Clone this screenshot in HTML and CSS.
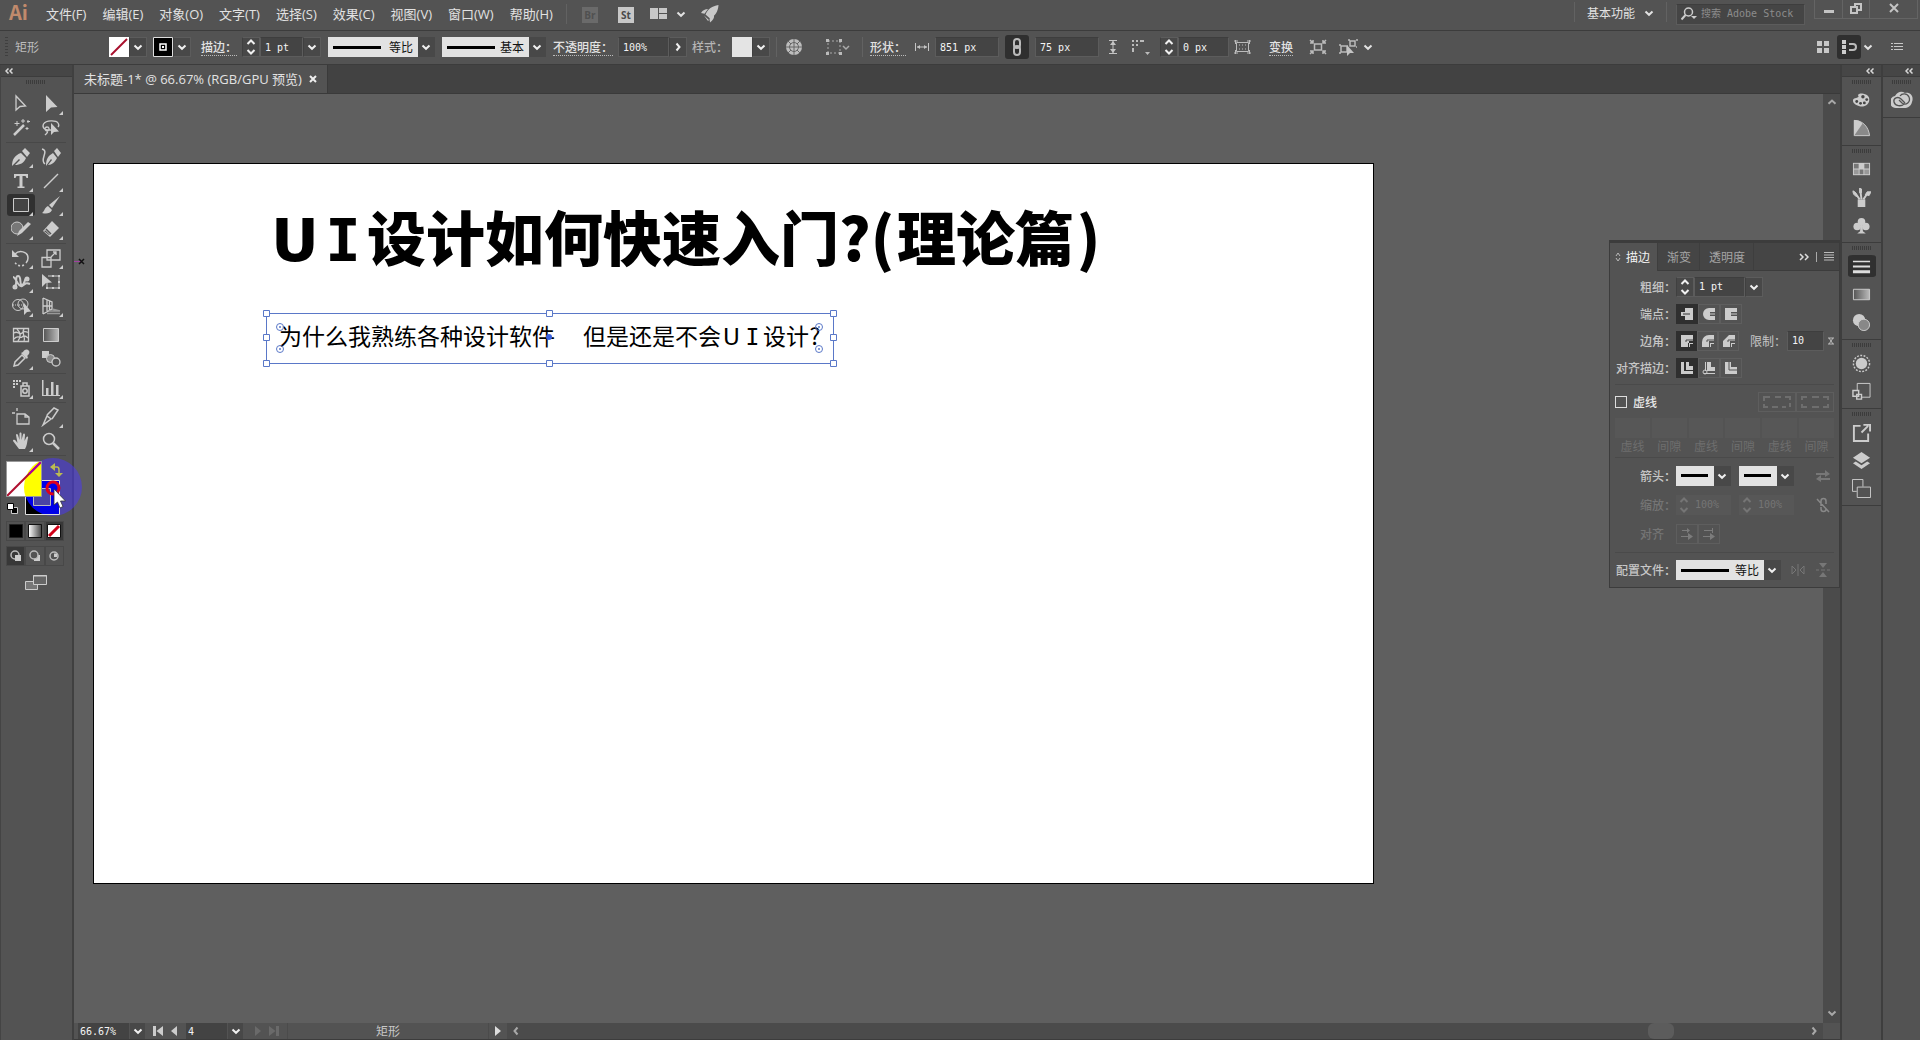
FILE: index.html
```html
<!DOCTYPE html>
<html lang="zh-CN">
<head>
<meta charset="utf-8">
<title>未标题-1</title>
<link rel="stylesheet" href="styles.css">
</head>
<body>
<svg class="defs" aria-hidden="true">
  <symbol id="down" viewBox="0 0 10 10"><path d="M1.5 3.5 5 6.8 8.500 3.500" fill="none" stroke="currentColor" stroke-width="2"/></symbol>
  <symbol id="up" viewBox="0 0 10 10"><path d="M1.500 6.800 5 3.500 8.500 6.800" fill="none" stroke="currentColor" stroke-width="2"/></symbol>
  <symbol id="right" viewBox="0 0 10 10"><path d="M3.500 1.500 6.500 5 3.500 8.500" fill="none" stroke="currentColor" stroke-width="2"/></symbol>
  <symbol id="left" viewBox="0 0 10 10"><path d="M6.500 1.500 3.500 5 6.500 8.500" fill="none" stroke="currentColor" stroke-width="2"/></symbol>
  <symbol id="collapse" viewBox="0 0 8 6"><path d="M3.500 .5 1 3 3.500 5.500M7.500 .5 5 3 7.500 5.500" fill="none" stroke="currentColor" stroke-width="1.500"/></symbol>
  <symbol id="steps" viewBox="0 0 10 18"><path d="M1.500 6 5 2.500 8.500 6M1.500 12 5 15.500 8.500 12" fill="none" stroke="currentColor" stroke-width="2"/></symbol>
</svg>

<header class="menubar">
  <span class="logo">Ai</span>
  <nav class="menus">
    <button>文件(F)</button><button>编辑(E)</button><button>对象(O)</button><button>文字(T)</button><button>选择(S)</button><button>效果(C)</button><button>视图(V)</button><button>窗口(W)</button><button>帮助(H)</button>
  </nav>
  <i class="sep"></i>
  <button class="app app-off">Br</button>
  <button class="app">St</button>
  <button class="bare arrange" aria-label="排列文档"><svg width="18" height="12"><path d="M0 0h8v11H0zM9 0h8v5H9zM9 6h8v5H9z" fill="#c8c8c8"/></svg><svg width="10" height="10"><use href="#down"/></svg></button>
  <button class="bare" aria-label="GPU 预览"><svg width="18" height="18"><path d="M17.500 0C11 1 7 4 4.500 9.500L9 13.500C14 11 17 7 17.500 0zM0 8C2 5 4 4 7 4L3.500 8.800zM9 17.500C12 15 13.500 13 13 10.500L8.500 13.800zM3 10.500 8 15 7 16z" fill="#c8c8c8"/></svg></button>
  <div class="spacer"></div>
  <i class="sep"></i>
  <button class="bare workspace">基本功能<svg width="10" height="10"><use href="#down"/></svg></button>
  <i class="sep"></i>
  <label class="search"><svg width="17" height="14"><circle cx="7.500" cy="5" r="4" fill="none" stroke="#ccc" stroke-width="1.500"/><path d="M4.500 8 .5 12.500" stroke="#ccc" stroke-width="2"/><path d="M10 9h6l-3 3z" fill="#ccc"/></svg><input type="text" placeholder="搜索 Adobe Stock" aria-label="搜索 Adobe Stock"></label>
  <div class="winbtns">
    <button aria-label="最小化"><svg width="12" height="16"><path d="M1 10h10v3H1z" fill="#c4c4c4"/></svg></button>
    <button aria-label="还原"><svg width="14" height="16" fill="none" stroke="#c4c4c4" stroke-width="2"><path d="M2 7h6v6H2zM6 7V4h6v6H8"/></svg></button>
    <button class="close" aria-label="关闭"><svg width="12" height="16" stroke="#c4c4c4" stroke-width="2"><path d="M2 4l8 8M10 4l-8 8"/></svg></button>
  </div>
</header>

<section class="control">
  <i class="vgrip"></i>
  <span class="what">矩形</span>
  <button class="swatch" aria-label="填色"><svg width="20" height="20"><path d="M0 0h20v20H0z" fill="#fff"/><path d="M2 18 18 2" stroke="#a80f2c" stroke-width="2"/></svg></button><button class="drop" aria-label="填色选项"><svg width="10" height="10"><use href="#down"/></svg></button>
  <button class="swatch m6" aria-label="描边颜色"><svg width="20" height="20"><path d="M.5 .5h19v19H.5z" fill="#000" stroke="#ddd"/><path d="M7 7h6v6H7z" fill="none" stroke="#fff" stroke-width="1.500"/><path d="M9 9h2v2H9z" fill="#fff"/></svg></button><button class="drop" aria-label="描边选项"><svg width="10" height="10"><use href="#down"/></svg></button>
  <label class="lab m10" for="sw">描边：</label>
  <button class="drop m5" aria-label="增减"><svg width="10" height="18"><use href="#steps"/></svg></button><input class="num w43" id="sw" value="1 pt"><button class="drop" aria-label="粗细选项"><svg width="10" height="10"><use href="#down"/></svg></button>
  <select class="profile w107 m7" aria-label="宽度配置"><option>等比</option></select>
  <select class="profile w104 m7" aria-label="画笔"><option>基本</option></select>
  <label class="lab m7" for="op">不透明度：</label>
  <input class="num w51 m5" id="op" value="100%"><button class="drop" aria-label="不透明度选项"><svg width="10" height="10"><use href="#right"/></svg></button>
  <span class="lab plain m5">样式：</span>
  <button class="swatch m4" aria-label="图形样式"><svg width="20" height="20"><path d="M0 0h20v20H0z" fill="#e4e4e4"/></svg></button><button class="drop" aria-label="样式选项"><svg width="10" height="10"><use href="#down"/></svg></button>
  <i class="sep m6"></i>
  <button class="bare m8" aria-label="重新着色"><svg width="18" height="18"><circle cx="9" cy="9" r="8" fill="#bdbdbd"/><g fill="none" stroke="#666"><circle cx="9" cy="9" r="4.500"/><path d="M9 1v16M1 9h16M3 3l3 3M15 3l-3 3M3 15l3-3M15 15l-3-3"/></g></svg></button>
  <button class="bare m23" aria-label="对齐"><svg width="24" height="16"><path d="M2 2h12v12H2z" fill="none" stroke="#aaa" stroke-dasharray="2 2"/><path d="M0 0h3v3H0zM13 0h3v3h-3zM0 13h3v3H0zM13 13h3v3h-3z" fill="#bbb"/><path d="M17 7l3 3 3-3" fill="none" stroke="#aaa" stroke-width="1.500"/></svg></button>
  <i class="sep m12"></i>
  <label class="lab m7" for="wv">形状：</label>
  <svg class="m8" width="16" height="12" stroke="#c4c4c4" fill="#c4c4c4"><path d="M1.500 2v8M14.500 2v8M3 6h10"/><path d="M3 6l3-2v4zM13 6l-3-2v4z" stroke="none"/></svg>
  <input class="num w64 m5" id="wv" value="851 px">
  <button class="toggle m6" aria-label="约束比例"><svg width="10" height="18" fill="none" stroke="#bbb" stroke-width="2"><rect x="2" y="1" width="6" height="9" rx="3"/><rect x="2" y="8" width="6" height="9" rx="3"/></svg></button>
  <input class="num w64 m6" aria-label="高度" value="75 px">
  <svg class="m8" width="12" height="16" stroke="#c4c4c4" fill="#c4c4c4"><path d="M2 1.500h8M2 14.500h8M6 2v12"/><path d="M6 2l3 4H3zM6 14l3-4H3z" stroke="none"/></svg>
  <button class="bare m12" aria-label="边角类型"><svg width="19" height="16" fill="#bbb"><path d="M1 1h2v2H1zM5 1h2v2H5zM9 1h4v2H9zM1 5h2v2H1zM5 5h2v2H5zM1 9h2v4H1zM14 13h5l-2.500 3z"/></svg></button>
  <button class="drop m10" aria-label="增减半径"><svg width="10" height="18"><use href="#steps"/></svg></button><input class="num w51" aria-label="圆角半径" value="0 px">
  <button class="bare m5" aria-label="形状模式"><svg width="17" height="14" fill="none" stroke="#bbb"><path d="M2.500 2.500h12v9h-12z"/><path d="M0 1h4M1.500 0v4M13 1h4M15.500 0v4M0 13h4M1.500 10v4M13 13h4M15.500 10v4M5 5h1M8 5h1M11 5h1M5 9h1M8 9h1M11 9h1"/></svg></button>
  <button class="lab link m18">变换</button>
  <button class="bare m16" aria-label="隔离"><svg width="18" height="16" fill="none" stroke="#bbb" stroke-width="1.500"><path d="M5.500 5h7v6h-7z"/><path d="M1 1l3 3M4 1v3H1M17 1l-3 3M14 1v3h3M1 15l3-3M4 15v-3H1M17 15l-3-3M14 15v-3h3"/></svg></button>
  <button class="bare m12" aria-label="选择类似对象"><svg width="19" height="18" fill="none" stroke="#bbb" stroke-width="1.500"><path d="M2 8h6v6H2zM11 3h5v5h-5zM0 7h2M0 15h2M9 2h2M17 2h2M17 9h1"/><path d="M8 7v11l3-3h4z" fill="#c4c4c4" stroke="none"/></svg></button>
  <button class="bare m5" aria-label="更多"><svg width="10" height="10"><use href="#down"/></svg></button>
  <div class="spacer"></div>
  <button class="bare" aria-label="网格"><svg width="14" height="14" fill="#c8c8c8"><path d="M1 1h5v5H1zM8 1h5v5H8zM1 8h5v5H1zM8 8h5v5H8z"/></svg></button>
  <button class="toggle m7" aria-label="对齐像素"><svg width="16" height="16"><path d="M1 1h4v4H1zM1 6h4v4H1zM1 11h4v4H1z" fill="#ccc"/><path d="M8 5h4a2.500 2.500 0 0 1 0 6H8" fill="none" stroke="#bbb" stroke-width="2"/></svg></button>
  <button class="bare m2" aria-label="对齐选项"><svg width="10" height="10"><use href="#down"/></svg></button>
  <button class="bare m18" aria-label="面板菜单"><svg width="12" height="10" fill="#c8c8c8"><path d="M0 1h2v1H0zM3 1h9v1H3zM0 4h2v1H0zM3 4h9v1H3zM0 7h2v1H0zM3 7h9v1H3z"/></svg></button>
</section>

<main class="work">
  <aside class="tools">
    <div class="dockhead leftalign"><svg width="8" height="6"><use href="#collapse"/></svg></div>
    <i class="hgrip"></i>
    <div class="tgroup">
      <button aria-label="选择"><svg viewBox="0 0 20 20"><path d="M5 2v14l4-3.500 5.500-.5z" fill="none" stroke="#ccc" stroke-width="1.300"/></svg></button>
      <button class="fly" aria-label="直接选择"><svg viewBox="0 0 20 20"><path d="M5 1v17l5-4.500 6.500-.5z" fill="#ccc"/></svg></button>
      <button aria-label="魔棒"><svg viewBox="0 0 20 20" stroke="#ccc" fill="none"><path d="M3 17 13 7" stroke-width="2.500"/><path d="M6 3v5M3.500 5.500h5M12 1v4M10 3h4M17 2v3M16 3.500h3M16 9v3M14.500 10.500h3"/></svg></button>
      <button aria-label="套索"><svg viewBox="0 0 20 20"><path d="M10 12C3 13 1 9 2.500 6 5 2 15 2 17 5c1 1.500 1 3 0 4M6 9a2 2 0 1 0 .1 0M7 12c0 3-2 4-3 5" fill="none" stroke="#ccc" stroke-width="1.300"/><path d="M10 5v12l3-3 5-.5z" fill="#ccc"/></svg></button>
    </div>
    <div class="tgroup">
      <button class="fly" aria-label="钢笔"><svg viewBox="0 0 20 20"><path d="M1 19C1 12 4 8 10 6l5 5c-2 5-6 7-11 7l5-5-1-1-6 6zM11 4l3-3 5 5-3 4z" fill="#ccc"/></svg></button>
      <button aria-label="曲率"><svg viewBox="0 0 20 20"><path d="M5 19C5 12 7 9 12 6l4 5c-2 4-5 7-9 7l4-5-1-1zM13 4l3-3 4 5-3 4z" fill="#ccc"/><path d="M1 2c4 1 3 4 2 7s-2 6 1 8" fill="none" stroke="#ccc" stroke-width="1.500"/></svg></button>
      <button class="fly" aria-label="文字"><svg viewBox="0 0 20 20"><path d="M3 3h14v4h-1.500l-1-2H11.500v10.500h2V17h-7v-1.500h2V5H5.500l-1 2H3z" fill="#ccc"/></svg></button>
      <button class="fly" aria-label="直线段"><svg viewBox="0 0 20 20"><path d="M3 17 17 3" stroke="#ccc" stroke-width="1.500"/></svg></button>
      <button class="fly on" aria-label="矩形"><svg viewBox="0 0 20 20"><path d="M2.500 3.500h15v13h-15z" fill="#444" stroke="#ccc"/></svg></button>
      <button class="fly" aria-label="画笔"><svg viewBox="0 0 20 20"><path d="M19 1 8 10l3 3zM7 11l4 4c-2 4-6 4-10 3 3-2 2-5 6-7z" fill="#ccc"/></svg></button>
      <button class="fly" aria-label="Shaper"><svg viewBox="0 0 20 20"><circle cx="6" cy="9" r="6" fill="#777" stroke="#ccc"/><path d="M6 17 8 12 17 3l3 2-9 9z" fill="#ccc"/></svg></button>
      <button class="fly" aria-label="橡皮擦"><svg viewBox="0 0 20 20"><path d="M11 2 18 9 9 18 2 12z" fill="#ccc"/><path d="M5 10 10 15" stroke="#535353" stroke-width="1.500"/><path d="M4.500 11.500 9 16l-1 0-5-4z" fill="#535353"/></svg></button>
    </div>
    <div class="tgroup">
      <button class="fly" aria-label="旋转"><svg viewBox="0 0 20 20" fill="none" stroke="#ccc" stroke-width="1.500"><path d="M4 6c4-4 13-3 13 4 0 3-1 4-2 5"/><path d="M13 17c-4 2-8 0-10-4" stroke-dasharray="2 2"/><path d="M1 2v7h7z" fill="#ccc" stroke="none"/></svg></button>
      <button class="fly" aria-label="缩放"><svg viewBox="0 0 20 20" fill="none" stroke="#ccc" stroke-width="1.300"><path d="M1 9.500h9V19H1zM6 2h13v10H6z"/><path d="M10 9l5-5M12 4h3v3"/></svg></button>
      <button class="fly" aria-label="宽度"><svg viewBox="0 0 20 20" fill="none" stroke="#ccc" stroke-width="2"><path d="M2 16C8 15 3 4 7 4s1 9 4 9 2-8 6-6M2 5c3 0 5 11 9 9s3-4 8-2"/><circle cx="4" cy="15" r="1.500"/><circle cx="16" cy="7" r="1.500"/></svg></button>
      <button aria-label="自由变换"><svg viewBox="0 0 20 20"><path d="M7 4h11v12H6V11" fill="none" stroke="#ccc"/><path d="M1 2v13l4-4 6-.5z" fill="#ccc"/><path d="M17 3h2v2h-2zM11 3h2v2h-2zM17 9h2v2h-2zM17 15h2v2h-2zM11 15h2v2h-2zM5 15h2v2H5z" fill="#ccc"/></svg></button>
      <button class="fly" aria-label="形状生成器"><svg viewBox="0 0 20 20"><circle cx="7" cy="9" r="5.500" fill="none" stroke="#ccc"/><circle cx="12" cy="8" r="5" fill="none" stroke="#ccc"/><path d="M2 9h9" stroke="#ccc" stroke-dasharray="1 1"/><path d="M13 7v12l3-3 4-.5z" fill="#ccc"/></svg></button>
      <button class="fly" aria-label="透视网格"><svg viewBox="0 0 20 20" fill="none" stroke="#ccc" stroke-width="1.300"><path d="M2 2v16M2 2l9 4v7L2 18M2 10h9M6 4v11M8.500 5v9"/><path d="M11 13l8 2H8M6 17.500h13" stroke="#999"/></svg></button>
    </div>
    <div class="tgroup">
      <button aria-label="网格"><svg viewBox="0 0 20 20" fill="none" stroke="#ccc" stroke-width="1.300"><path d="M2.500 3.500h15v13h-15z"/><path d="M3 8c4-3 5 3 8 0s5 0 6-1M3 14c4-5 6 0 8-2s4-1 6 1M6 4c4 4 4 8 1 12M13 4c-3 4 2 8 0 12"/></svg></button>
      <button aria-label="渐变"><svg viewBox="0 0 20 20"><defs><linearGradient id="g"><stop stop-color="#555"/><stop offset="1" stop-color="#bbb"/></linearGradient></defs><path d="M2.500 3.500h15v13h-15z" fill="url(#g)" stroke="#ccc"/></svg></button>
      <button class="fly" aria-label="吸管"><svg viewBox="0 0 20 20"><path d="M3 17 4 13l7-7 3 3-7 7z" fill="none" stroke="#ccc" stroke-width="1.500"/><path d="M10 4l6 6 1-2-1-1c3-2 3-5 1-6s-4 0-5 2z" fill="#ccc"/></svg></button>
      <button aria-label="混合"><svg viewBox="0 0 20 20"><path d="M1 2h7v7H1z" fill="#ccc"/><circle cx="9.500" cy="9.500" r="4" fill="#888" stroke="#ccc"/><circle cx="15" cy="13" r="4" fill="#535353" stroke="#ccc" stroke-width="1.300"/></svg></button>
    </div>
    <div class="tgroup">
      <button class="fly" aria-label="符号喷枪"><svg viewBox="0 0 20 20"><path d="M2 3h2M5 3h2M8 3h2M2 6h2M5 6h2M2 9h2" stroke="#ccc" stroke-width="2"/><path d="M10 8h8v10h-8zM12 8V5h4v3" fill="none" stroke="#ccc" stroke-width="1.500"/><circle cx="14" cy="13" r="2.200" fill="none" stroke="#ccc" stroke-width="1.500"/></svg></button>
      <button class="fly" aria-label="图表"><svg viewBox="0 0 20 20" fill="#ccc"><path d="M1 2h1.500v15H19v1H1zM5 10h2.500v7H5zM10 4h2.500v13H10zM15 7h2.500v10H15z"/></svg></button>
    </div>
    <div class="tgroup">
      <button aria-label="画板"><svg viewBox="0 0 20 20" fill="none" stroke="#ccc" stroke-width="1.300"><path d="M1 6h3M6 1v3M6 7h8l4 3v7H6zM14 7v3h4"/></svg></button>
      <button class="fly" aria-label="切片"><svg viewBox="0 0 20 20"><path d="M2 18 6 9l4 3zM6 8l7-7 4 2-6 9" fill="none" stroke="#ccc" stroke-width="1.500"/></svg></button>
      <button class="fly" aria-label="抓手"><svg viewBox="0 0 20 20"><path d="M8 18C6 15 4 13 2 10c0-1 1-2 3 0l1.500 2L5 4c0-1.500 1.500-1.500 2 0l1.500 5V2.500c0-1.500 2-1.500 2 0V9L12 3.500c.5-1.500 2-1 2 .5L13.500 10l2-4c1-1.200 2-.5 1.500 1-1 4-1 8-3 11z" fill="#ccc"/></svg></button>
      <button aria-label="缩放显示"><svg viewBox="0 0 20 20" fill="none" stroke="#ccc"><circle cx="8" cy="8" r="5.500" stroke-width="1.500"/><path d="M12 12l6 6" stroke-width="2.500"/></svg></button>
    </div>
    <div class="colours">
      <svg class="over" width="74" height="62">
        <defs><clipPath id="c"><circle cx="53" cy="33" r="29"/></clipPath><clipPath id="k"><path d="M7 8h34v34H7z"/></clipPath></defs>
        <circle cx="53" cy="33" r="29" fill="#4a35ff" fill-opacity=".5"/>
        <path d="M25.500 26.500h34v34h-34z" fill="#000"/><path d="M25.500 26.500h34v34h-34z" fill="#0000e8" clip-path="url(#c)"/>
        <path d="M25.500 26.500h34v34h-34z" fill="none" stroke="#ddd"/><path d="M33.500 34.500h17v17h-17z" fill="#4a44a4" stroke="#bbb"/>
        <path d="M6.500 7.500h35v35h-35z" fill="#fff" stroke="#999"/>
        <g clip-path="url(#k)"><circle cx="53" cy="33" r="29" fill="#ff0"/><path d="M6 43 42 7" stroke="#b01030" stroke-width="2"/><path d="M29 20 42 7" stroke="#b000a0" stroke-width="2"/></g>
        <path d="M52 13h5q2 0 2 3v3" fill="none" stroke="#bcbc50" stroke-width="1.500"/><path d="M50 13l5-4v8zM59 23l-4-4h8z" fill="#bcbc50"/>
        <path d="M11.500 53.500h6v6h-6z" fill="#000" stroke="#ccc"/><path d="M7.500 49.500h6v6h-6z" fill="#fff" stroke="#000"/>
        <circle cx="53" cy="34" r="6" fill="none" stroke="#e00018" stroke-width="3"/><path d="M54 35v16l3.500-3 2.500 6 3-1.500-2.500-5.500h5z" fill="#fff" stroke="#333" stroke-width=".8"/>
      </svg>
    </div>
    <div class="trio">
      <button aria-label="颜色"><svg width="14" height="14"><path d="M.5 .5h13v13H.5z" fill="#000" stroke="#222"/></svg></button>
      <button aria-label="渐变填充"><svg width="14" height="14"><defs><linearGradient id="w"><stop stop-color="#fff"/><stop offset="1" stop-color="#444"/></linearGradient></defs><path d="M.5 .5h13v13H.5z" fill="url(#w)" stroke="#111"/></svg></button>
      <button class="on" aria-label="无"><svg width="14" height="14"><path d="M.5 .5h13v13H.5z" fill="#fff" stroke="#111"/><path d="M2 12 12 2" stroke="#d00018" stroke-width="3"/></svg></button>
    </div>
    <div class="trio">
      <button class="on" aria-label="正常绘图"><svg width="12" height="12"><circle cx="5" cy="5" r="4" fill="none" stroke="#bbb" stroke-width="1.500"/><path d="M5 5h6v6H5z" fill="#ccc"/></svg></button>
      <button aria-label="背面绘图"><svg width="12" height="12"><path d="M5 5h6v6H5z" fill="#ccc"/><circle cx="5" cy="5" r="4" fill="#535353" stroke="#bbb" stroke-width="1.500"/></svg></button>
      <button aria-label="内部绘图"><svg width="12" height="12"><circle cx="6" cy="6" r="4" fill="none" stroke="#bbb" stroke-width="1.500"/><path d="M6 7V3.500h3V7z" fill="#ccc"/></svg></button>
    </div>
    <button class="bare screenmode" aria-label="屏幕模式"><svg width="23" height="17"><path d="M.5 7.500h12v8H.5z" fill="#777" stroke="#ccc"/><path d="M8.500 1.500h13v9h-13z" fill="#666" stroke="#ccc"/><path d="M8 2h14" stroke="#ccc"/></svg></button>
  </aside>

  <section class="doc">
    <div class="tabs"><div class="tab"><span>未标题-1* @ 66.67% (RGB/GPU 预览)</span><button class="bare" aria-label="关闭文档"><svg width="8" height="8" stroke="#eee" stroke-width="2"><path d="M1 1l6 6M7 1 1 7"/></svg></button></div></div>
    <div class="view">
      <div class="canvas">
        <svg class="guide" width="12" height="8"><path d="M0 4.500h8" stroke="#a040a0"/><path d="M5 2l5 5M10 2 5 7" stroke="#111" stroke-width="1.500"/></svg>
        <div class="artboard">
          <h1 class="title"><span class="lt">U</span><span class="lt slab">I</span>设计如何快速入门<span class="half">?</span><span class="half">(</span>理论篇<span class="half">)</span></h1>
          <p class="sub">为什么我熟练各种设计软件<span class="gap">　</span>但是还是不会<span class="lt">U</span><span class="lt slab">I</span>设计<span class="half">?</span></p>
          <svg class="sel" width="576" height="60" fill="#fff" stroke="#5a78c8">
            <path d="M4.500 4.500h567v50h-567z" fill="none"/>
            <path d="M1.500 1.500h6v6h-6zM284.500 1.500h6v6h-6zM568.500 1.500h6v6h-6zM1.500 25.500h6v6h-6zM568.500 25.500h6v6h-6zM1.500 51.500h6v6h-6zM284.500 51.500h6v6h-6zM568.500 51.500h6v6h-6z"/>
            <g fill="none"><circle cx="18" cy="18" r="3.500"/><circle cx="18" cy="40" r="3.500"/><circle cx="557" cy="18" r="3.500"/><circle cx="557" cy="40" r="3.500"/></g>
            <g fill="#5a78c8" stroke="none"><circle cx="18" cy="18" r="1"/><circle cx="18" cy="40" r="1"/><circle cx="557" cy="18" r="1"/><circle cx="557" cy="40" r="1"/><circle cx="287" cy="28" r="3" fill="#3a62e0"/></g>
          </svg>
        </div>
      </div>
      <div class="vscroll"><svg width="10" height="10"><use href="#up"/></svg><svg width="10" height="10"><use href="#down"/></svg></div>
    </div>
    <footer class="status">
      <input class="snum w51" aria-label="缩放比例" value="66.67%"><button class="sdrop" aria-label="缩放选项"><svg width="10" height="10"><use href="#down"/></svg></button>
      <button class="bare nav" aria-label="首项"><svg width="10" height="10" fill="#ccc"><path d="M0 0h3v10H0zM10 0v10L3.500 5z"/></svg></button>
      <button class="bare nav" aria-label="上一项"><svg width="6" height="10" fill="#ccc"><path d="M6 0v10L0 5z"/></svg></button>
      <input class="snum w41" aria-label="画板" value="4"><button class="sdrop" aria-label="画板选项"><svg width="10" height="10"><use href="#down"/></svg></button>
      <button class="bare nav m4" aria-label="下一项"><svg width="6" height="10" fill="#6a6a6a"><path d="M0 0v10l6-5z"/></svg></button>
      <button class="bare nav" aria-label="末项"><svg width="10" height="10" fill="#6a6a6a"><path d="M10 0H7v10h3zM0 0v10l6.500-5z"/></svg></button>
      <span class="sname">矩形</span>
      <button class="bare play" aria-label="状态选项"><svg width="6" height="10" fill="#ddd"><path d="M0 0v10l6-5z"/></svg></button>
      <div class="hscroll"><svg width="10" height="10"><use href="#left"/></svg><i class="thumb"></i><svg width="10" height="10"><use href="#right"/></svg></div>
      <i class="corner"></i>
    </footer>
  </section>

  <aside class="dock">
    <div class="dockhead"><svg width="8" height="6"><use href="#collapse"/></svg></div>
    <div class="dgroup"><i class="hgrip"></i>
      <button aria-label="颜色"><svg viewBox="0 0 20 20"><path d="M1 10C1 7 5 8 7 6 5 3 9 2 12 3c5 1 7 4 6 8s-6 6-10 5-7-3-7-6z" fill="#ccc"/><g fill="#444"><circle cx="5" cy="11" r="1.500"/><circle cx="9" cy="13" r="1.500"/><circle cx="13" cy="12.500" r="1.500"/><circle cx="15.500" cy="9" r="1.500"/><circle cx="11.500" cy="6" r="1.800"/></g></svg></button>
      <button aria-label="颜色参考"><svg viewBox="0 0 20 20"><path d="M2.500 1.500c9 0 15 7 16 16h-16z" fill="#8a8a8a" stroke="#ccc"/><path d="M2 1c4 0 7 1 9 4L2 18z" fill="#ccc"/></svg></button></div>
    <div class="dgroup"><i class="hgrip"></i>
      <button aria-label="色板"><svg viewBox="0 0 20 20"><path d="M1 3h18v13H1z" fill="#ccc"/><path d="M2 4h5v5H2zM13 4h5v5h-5zM8 10h4v5H8z" fill="#777"/><path d="M2 10h5v5H2zM13 10h5v5h-5z" fill="#999"/></svg></button>
      <button aria-label="画笔"><svg viewBox="0 0 20 20"><path d="M6 12h8v8H6z" fill="#ccc"/><path d="M8 12 4 6M10 12 9 4M12 12l4-6" stroke="#ccc" stroke-width="2"/><path d="M1 3c3 1 4 3 4 6-3-1-4-3-4-6zM8 0l2 1v4H8zM14 7l2-3h4l-2 4z" fill="#ccc" stroke="#ccc"/></svg></button>
      <button aria-label="符号"><svg viewBox="0 0 20 20" fill="#ccc"><circle cx="10" cy="6" r="4"/><circle cx="5.500" cy="11" r="4"/><circle cx="14.500" cy="11" r="4"/><path d="M9 9h2l.5 7 3 2.500h-9l3-2.500z"/></svg></button></div>
    <div class="dgroup"><i class="hgrip"></i>
      <button class="on" aria-label="描边"><svg viewBox="0 0 20 20" fill="#ddd"><path d="M1 4h18v1.500H1zM1 9h18v2H1zM1 14h18v3H1z"/></svg></button>
      <button aria-label="渐变"><svg viewBox="0 0 20 20"><path d="M1.500 4.500h17v11h-17z" fill="url(#g)" stroke="#ccc"/></svg></button>
      <button aria-label="透明度"><svg viewBox="0 0 20 20"><circle cx="7.500" cy="7.500" r="6.500" fill="#ccc"/><circle cx="12.500" cy="12.500" r="6" fill="#888" stroke="#ccc"/></svg></button></div>
    <div class="dgroup"><i class="hgrip"></i>
      <button aria-label="外观"><svg viewBox="0 0 20 20"><circle cx="10" cy="10" r="6" fill="#ccc"/><circle cx="10" cy="10" r="8.500" fill="none" stroke="#ccc" stroke-dasharray="2 1.500" stroke-width="1.500"/></svg></button>
      <button aria-label="图形样式"><svg viewBox="0 0 20 20" fill="none" stroke="#ccc"><path d="M5.500 9V1.500h13.500V16H10"/><path d="M1 9h6v6H1zM5 13h5v5H5z" stroke-width="1.500"/></svg></button></div>
    <div class="dgroup"><i class="hgrip"></i>
      <button aria-label="资源导出"><svg viewBox="0 0 20 20" fill="none" stroke="#ccc" stroke-width="2"><path d="M9 3H2v16h15v-8M10 10l7-7M12 2h7v7"/></svg></button>
      <button aria-label="图层"><svg viewBox="0 0 20 20" fill="#ccc"><path d="M10 1l9 6-9 6-9-6zM4 11l6 4 6-4 3 2-9 6-9-6z"/></svg></button>
      <button aria-label="画板面板"><svg viewBox="0 0 20 20" fill="none" stroke="#ccc"><path d="M5 13H.5V.5h11V8M5.500 8.500h14v11h-14z"/></svg></button></div>
  </aside>
  <aside class="dock last">
    <div class="dockhead"><svg width="8" height="6"><use href="#collapse"/></svg></div>
    <div class="dgroup"><i class="hgrip"></i>
      <button aria-label="Creative Cloud"><svg class="wide" viewBox="0 0 22 18"><path d="M6 17A6 6 0 0 1 4 5C7 0 11 0 14 2c6-1 9 4 7 9-1 4-4 6-8 6z" fill="#ccc"/><path d="M13 13c-3 3-9 2-10-2s4-6 7-3l4 4M9 5c2-3 7-3 9 1 2 5-3 9-7 6L8 9" fill="none" stroke="#535353" stroke-width="1.300"/></svg></button></div>
  </aside>

  <section class="panel">
    <div class="ptabs"><button class="cur"><svg width="6" height="10" fill="none" stroke="#bbb"><path d="M1 4l2-3 2 3M1 6l2 3 2-3"/></svg>描边</button><button>渐变</button><button>透明度</button><div class="spacer"></div><svg width="10" height="8" fill="none" stroke="#ddd" stroke-width="1.500"><path d="M1 1l3 3-3 3M6 1l3 3-3 3"/></svg><i class="bar"></i><svg width="10" height="9" fill="#bbb"><path d="M0 0h10v1H0zM0 2.500h10v1H0zM0 5h10v1H0zM0 7.500h10v1H0z"/></svg></div>
    <div class="pbody">
      <div class="row"><label class="pl" for="pw">粗细：</label><button class="drop" aria-label="增减粗细"><svg width="10" height="18"><use href="#steps"/></svg></button><input class="num w51" id="pw" value="1 pt"><button class="drop" aria-label="粗细列表"><svg width="10" height="10"><use href="#down"/></svg></button></div>
      <div class="row"><span class="pl">端点：</span>
        <button class="opt on" aria-label="平头端点"><svg width="14" height="14"><path d="M5 1h8v12H5V9H1V5h4z" fill="#ccc"/><path d="M3 7h7" stroke="#333"/></svg></button><button class="opt" aria-label="圆头端点"><svg width="14" height="14"><path d="M13 1v4H8v4h5v4H7A6 6 0 0 1 7 1z" fill="#ccc"/><path d="M6 7h7" stroke="#ccc"/></svg></button><button class="opt" aria-label="方头端点"><svg width="14" height="14"><path d="M1 1h12v4H7v4h6v4H1z" fill="#ccc"/><path d="M6 7h7" stroke="#ccc"/></svg></button></div>
      <div class="row"><span class="pl">边角：</span>
        <button class="opt on" aria-label="斜接连接"><svg width="14" height="14"><path d="M1 1h12v6H9v2H8v4H1z" fill="#ccc"/><path d="M6 6h7M6 6v2" stroke="#444" fill="none"/><path d="M9 9h4v1h-3v3H9z" fill="#ccc"/></svg></button><button class="opt" aria-label="圆角连接"><svg width="14" height="14"><path d="M1 13V8a7 7 0 0 1 7-7h5v6H8v6z" fill="#ccc"/><path d="M6 6h7M6 6v2" stroke="#555" fill="none"/><path d="M9 9h4v1h-3v3H9z" fill="#ccc"/></svg></button><button class="opt" aria-label="斜角连接"><svg width="14" height="14"><path d="M1 13V7l6-6h6v6H8v6z" fill="#ccc"/><path d="M6 6h7M6 6v2" stroke="#555" fill="none"/><path d="M9 9h4v1h-3v3H9z" fill="#ccc"/></svg></button>
        <label class="lim" for="lim">限制：</label><input class="num w37" id="lim" value="10"><span class="x"><svg width="6" height="8" stroke="#bbb" fill="none"><path d="M0 1h6M0 7h6M1 1l4 6M5 1 1 7"/></svg></span></div>
      <div class="row"><span class="pl">对齐描边：</span>
        <button class="opt on" aria-label="居中对齐"><svg width="14" height="14"><path d="M1 1h3v9h9v3H1zM6 1h3v4h4v4H6z" fill="#ccc"/></svg></button><button class="opt" aria-label="内侧对齐"><svg width="14" height="14"><path d="M5 1h4v5h4v4H5zM2 12h11v1H2zM3 1h1v9H3z" fill="#ccc"/><circle cx="3" cy="11" r="2" fill="none" stroke="#ccc"/></svg></button><button class="opt" aria-label="外侧对齐"><svg width="14" height="14"><path d="M1 1h6v5h6v7H1z" fill="#ccc"/><path d="M5 1v8h8" fill="none" stroke="#555"/></svg></button></div>
      <div class="dashrow"><label><input type="checkbox">虚线</label><div class="spacer"></div><button class="opt wideopt" aria-label="保留虚线"><svg width="28" height="12" fill="none" stroke="#6e6e6e" stroke-width="2"><path d="M1 5V1h6M12 1h6M22 1h5v3M1 8v3h4M9 11h6M19 11h4M27 7v4"/></svg></button><button class="opt wideopt" aria-label="对齐虚线"><svg width="28" height="12" fill="none" stroke="#6e6e6e" stroke-width="2"><path d="M1 4V1h5M11 1h7M22 1h5v3M1 8v3h5M11 11h7M22 11h5V8"/></svg></button></div>
      <div class="cells"><label><input disabled>虚线</label><label><input disabled>间隙</label><label><input disabled>虚线</label><label><input disabled>间隙</label><label><input disabled>虚线</label><label><input disabled>间隙</label></div>
      <div class="row r29"><span class="pl">箭头：</span><select class="profile w55 arrow" aria-label="起点箭头"><option></option></select><select class="profile w55 arrow m8" aria-label="终点箭头"><option></option></select><svg class="end" width="14" height="12" fill="#777"><path d="M0 3h9V0l5 4-5 3V5H0zM14 8H5V5L0 9l5 3v-2h9z"/></svg></div>
      <div class="row r29 off"><span class="pl">缩放：</span><span class="dis"><svg width="10" height="18"><use href="#steps"/></svg><input disabled value="100%" aria-label="起点缩放"></span><span class="dis m8"><svg width="10" height="18"><use href="#steps"/></svg><input disabled value="100%" aria-label="终点缩放"></span><svg class="end" width="14" height="16" fill="none" stroke="#888" stroke-width="1.500"><path d="M5 9V4a2.500 2.500 0 0 1 5 0v3M5 10v2a2.500 2.500 0 0 0 5 0M1 2l12 13"/></svg></div>
      <div class="row r29 off"><span class="pl">对齐<b class="blank"></b></span><button class="opt" aria-label="扩展到终点外"><svg width="14" height="12" fill="#7c7c7c"><path d="M2 2h5V0l3 2.500L7 5V3H2zM1 8h7V5l5 3.500L8 12V9H1z"/></svg></button><button class="opt" aria-label="置于终点处"><svg width="14" height="12" fill="#7c7c7c"><path d="M2 2h8V0h1v5h-1V3H2zM1 8h7V5l5 3.500L8 12V9H1z"/></svg></button></div>
      <div class="row lastrow"><label class="pl" for="pf">配置文件：</label><select class="profile w105" id="pf"><option>等比</option></select><svg class="m10" width="14" height="12" fill="none" stroke="#777"><path d="M1 2v8l4-4zM7 0v12M13 2v8L9 6z"/></svg><svg class="end" width="14" height="14" fill="#777"><path d="M3 0h8L7 5zM3 14h8L7 9zM0 6.500h3v1H0zM5 6.500h4v1H5zM11 6.500h3v1h-3z"/></svg></div>
    </div>
  </section>
</main>
</body>
</html>
```
FILE: styles.css
```css
* { box-sizing: border-box; }
html, body { height: 100%; margin: 0; }
body {
  display: flex; flex-direction: column; overflow: hidden;
  background: #535353; color: #e2e2e2;
  font: 12px/16px "Noto Sans CJK SC", sans-serif;
}
.defs { position: absolute; width: 0; height: 0; }
svg { display: block; flex: none; }
button, input, select { font: inherit; color: inherit; border: 0; border-radius: 0; padding: 0; margin: 0; background: none; }
i { display: block; flex: none; }
.spacer { flex: 1; }
.bare { display: flex; align-items: center; flex: none; }
.sep { width: 1px; height: 20px; background: #626262; }

.menubar { display: flex; align-items: center; flex: none; height: 31px; padding: 0 2px 6px 9px; border-bottom: 1px solid #3c3c3c; }
.logo { width: 29px; color: #c08a6c; font: bold 20px/24px "Noto Sans CJK SC", sans-serif; }
.menus { display: flex; margin-top: 3px; }
.menus button { padding: 0 8px; font: 13px/18px "Open Sans", "Noto Sans CJK SC", sans-serif; }
.menus + .sep { margin: 4px 15px 0 5px; }
.app { width: 16px; height: 16px; margin: 6px 20px 0 0; background: #c8c8c8; color: #4a4a4a; font: bold 10px/16px "Open Sans", sans-serif; text-align: center; }
.app-off { background: #6a6a6a; color: #505050; }
.app + .arrange { margin-left: -4px; }
.arrange { gap: 8px; margin-right: 15px; }
.arrange, .arrange + .bare { margin-top: 4px; }
.workspace { gap: 9px; margin: 1px 12px 0 12px; }
.search { display: flex; align-items: center; width: 129px; height: 21px; margin: 4px 9px 0; padding-left: 4px; background: #454545; border: 1px solid #5c5c5c; border-top-color: #3e3e3e; }
.search input { width: 104px; margin-left: 3px; font: 10px/14px "DejaVu Sans Mono", "Noto Sans CJK SC", monospace; outline: 0; }
.search input::placeholder { color: #8c8c8c; opacity: 1; }
.winbtns { display: flex; align-self: flex-start; border: 1px solid #646464; border-top: 0; }
.winbtns button { display: flex; justify-content: center; width: 27px; height: 18px; border-left: 1px solid #646464; }
.winbtns button:first-child { border-left: 0; }
.winbtns .close { width: 48px; }

.control { display: flex; align-items: center; flex: none; height: 34px; padding: 0 17px 1px 5px; border-bottom: 1px solid #3c3c3c; }
.vgrip { width: 3px; height: 20px; background: repeating-linear-gradient(#3f3f3f 0 1px, transparent 1px 3px); }
.what { width: 94px; margin-left: 7px; color: #bdbdbd; }
.swatch { width: 20px; height: 20px; flex: none; }
.drop { display: flex; align-items: center; justify-content: center; flex: none; width: 18px; height: 20px; background: #484848; border: 1px solid #5c5c5c; border-left-color: #404040; color: #f0f0f0; }
.num { flex: none; height: 20px; padding-left: 4px; background: #444; border: 1px solid #5c5c5c; border-top-color: #3e3e3e; color: #f4f4f4; font: 10px/14px "DejaVu Sans Mono", monospace; }
.lab { flex: none; border-bottom: 1px dotted #bbb; font-weight: 500; line-height: 16px; white-space: nowrap; }
.plain { border: 0; color: #b4b4b4; }
.profile { appearance: none; flex: none; height: 20px; padding: 0 22px 0 0; color: #111; text-align: right; text-align-last: right;
  background:
    url("data:image/svg+xml,%3Csvg xmlns='http://www.w3.org/2000/svg' width='10' height='10'%3E%3Cpath d='M1.500 3.500 5 6.800 8.500 3.500' fill='none' stroke='%23f0f0f0' stroke-width='2'/%3E%3C/svg%3E") right 4px center no-repeat,
    linear-gradient(#484848, #484848) right / 17px 100% no-repeat,
    linear-gradient(#000, #000) 5px center / 48px 3px no-repeat, #e2e2e2; }
.arrow { background-size: auto, 17px 100%, 27px 3px, auto; }
.toggle { display: flex; align-items: center; justify-content: center; flex: none; width: 24px; height: 24px; background: #2f2f2f; border-radius: 3px; }
.m2 { margin-left: 2px; } .m4 { margin-left: 4px; } .m5 { margin-left: 5px; } .m6 { margin-left: 6px; } .m7 { margin-left: 7px; } .m8 { margin-left: 8px; }
.m10 { margin-left: 10px; } .m12 { margin-left: 12px; } .m16 { margin-left: 16px; } .m18 { margin-left: 18px; } .m23 { margin-left: 23px; }
.w37 { width: 37px; } .w41 { width: 41px; } .w43 { width: 43px; } .w51 { width: 51px; } .w55 { width: 55px; }
.w64 { width: 64px; } .w104 { width: 104px; } .w105 { width: 105px; } .w107 { width: 107px; }

.work { position: relative; display: flex; flex: 1; min-height: 0; }
.dockhead { display: flex; align-items: center; justify-content: flex-end; height: 12px; padding: 0 7px; background: #464646; border-bottom: 1px solid #3c3c3c; color: #d8d8d8; }
.leftalign { justify-content: flex-start; padding: 0 4px; }
.hgrip { width: 20px; height: 4px; background: repeating-linear-gradient(90deg, #3c3c3c 0 1px, transparent 1px 2px); }

.tools { position: relative; z-index: 2; width: 74px; flex: none; border-right: 2px solid #404040; border-left: 1px solid #444; }
.tools > .hgrip { margin: 3px 0 8px 25px; }
.tgroup { display: grid; grid-template-columns: 30px 30px; width: 60px; margin: 0 0 2px 5px; padding-bottom: 2px; border-bottom: 1px solid #484848; }
.tgroup button { position: relative; display: flex; align-items: center; justify-content: center; height: 24px; border: 1px solid transparent; border-radius: 4px; background-clip: padding-box; }
.tgroup svg { width: 20px; height: 20px; }
.tgroup .on { background-color: #303030; }
.fly::after { content: ""; position: absolute; right: 2px; bottom: 0; border: 2px solid; border-color: transparent #ccc #ccc transparent; }
.colours { height: 62px; margin: -4px 0 0 -1px; }
.over { overflow: visible; }
.trio { display: flex; width: 58px; margin: 5px 0 0 5px; }
.trio button { display: flex; align-items: center; justify-content: center; width: 20px; height: 20px; border: 1px solid #484848; }
.trio .on { background: #383838; }
.screenmode { margin: 8px 0 0 24px; }

.doc { display: flex; flex-direction: column; flex: 1; min-width: 0; }
.tabs { display: flex; flex: none; height: 29px; background: #424242; border-bottom: 1px solid #3a3a3a; }
.tab { display: flex; align-items: center; width: 254px; padding: 0 10px; background: #535353; border-right: 1px solid #3a3a3a; font: 13px/18px "Open Sans", "Noto Sans CJK SC", sans-serif; white-space: nowrap; justify-content: space-between; }
.view { display: flex; flex: 1; min-height: 0; }
.canvas { position: relative; flex: 1; overflow: hidden; background: #5f5f5f; }
.guide { position: absolute; left: 0; top: 163px; }
.artboard { position: absolute; left: 19px; top: 69px; width: 1281px; height: 721px; background: #fff; border: 1px solid #000; color: #000; }
.title { position: absolute; left: 177px; top: 32px; margin: 0; font-weight: 900; font-size: 59px; line-height: 80px; white-space: nowrap; }
.lt, .half, .gap { display: inline-block; text-align: center; }
.lt { font-family: "DejaVu Sans", sans-serif; line-height: 1; }
.slab { font-family: "DejaVu Sans Mono", monospace; }
.title .lt { width: 48px; }
.title .half { width: 29px; }
.sub { position: absolute; left: 185px; top: 155px; margin: 0; font-size: 23px; line-height: 32px; white-space: nowrap; }
.sub .lt { width: 21px; }
.sub .half { width: 12px; }
.sub .gap { width: 28px; }
.sel { position: absolute; left: 168px; top: 145px; }
.vscroll { display: flex; flex-direction: column; justify-content: space-between; align-items: center; width: 17px; padding: 3px 0 5px; background: #4b4b4b; color: #a8a8a8; }
.status { display: flex; align-items: center; flex: none; height: 17px; padding-left: 4px; border-bottom: 1px solid #3c3c3c; }
.snum { height: 16px; padding-left: 2px; background: #434343; color: #f4f4f4; font: 10px/14px "DejaVu Sans Mono", monospace; }
.sdrop { display: flex; align-items: center; justify-content: center; width: 15px; height: 16px; margin: 0 8px 0 1px; background: #484848; color: #f0f0f0; }
.nav { margin-right: 8px; }
.nav + .snum { margin-left: 1px; }
.sname { flex: none; width: 202px; border: 1px solid #4b4b4b; border-width: 0 1px; color: #c8c8c8; text-align: center; line-height: 16px; }
.play { justify-content: center; width: 18px; }
.hscroll { display: flex; align-items: center; flex: 1; padding: 0 4px; height: 16px; background: #4b4b4b; color: #a8a8a8; }
.thumb { width: 26px; height: 16px; margin: 0 135px 0 auto; border-radius: 6px; background: #5c5c5c; }
.corner { width: 17px; height: 16px; background: #535353; }

.dock { flex: none; width: 41px; border-left: 2px solid #3e3e3e; }
.last { width: 39px; }
.dgroup { display: flex; flex-direction: column; align-items: center; padding: 3px 0; border-bottom: 1px solid #3c3c3c; }
.dgroup .hgrip { margin-bottom: 2px; }
.dgroup button { display: flex; align-items: center; justify-content: center; width: 28px; height: 28px; border: 3px solid transparent; border-width: 3px 0; border-radius: 5px; background-clip: padding-box; }
.dgroup .on { background-color: #303030; }
.dgroup button svg { width: 19px; height: 19px; }
.dgroup button .wide { width: 22px; height: 18px; }

.panel { position: absolute; right: 80px; top: 175px; width: 231px; background: #535353; border: 1px solid #3c3c3c; border-top-width: 3px; z-index: 3; }
.ptabs { display: flex; align-items: center; height: 28px; padding-right: 5px; background: #454545; border-bottom: 1px solid #3c3c3c; }
.ptabs button { display: flex; align-items: center; gap: 5px; height: 28px; padding: 0 8px 0 9px; border-right: 1px solid #3e3e3e; color: #a4a4a4; }
.ptabs .cur { padding: 0 7px 0 5px; background: #535353; color: #f2f2f2; }
.bar { width: 1px; height: 10px; margin: 0 7px; background: #aaa; }
.pbody { padding: 2px 5px 0; color: #c6c6c6; }
.row { display: flex; align-items: center; height: 27px; }
.pl { flex: none; width: 61px; text-align: right; font-weight: 500; white-space: nowrap; }
.pl .blank { display: inline-block; width: 12px; }
.opt { display: flex; align-items: center; justify-content: center; width: 22px; height: 20px; border: 1px solid #5e5e5e; }
.opt.on { background: #2f2f2f; border-color: #2f2f2f; }
.wideopt { width: 38px; }
.lim { margin: 0 1px 0 11px; white-space: nowrap; }
.x { margin-left: 4px; }
.dashrow { display: flex; align-items: center; height: 34px; margin-top: 3px; border-top: 1px solid #4a4a4a; color: #e8e8e8; font-weight: 500; }
.dashrow label { display: flex; align-items: center; gap: 6px; }
.dashrow input { appearance: none; width: 12px; height: 12px; border: 1px solid #ddd; }
.cells { display: grid; grid-template-columns: repeat(6, 1fr); gap: 2px; padding-bottom: 3px; border-bottom: 1px solid #4a4a4a; color: #6e6e6e; text-align: center; }
.cells label { display: block; }
.cells input { display: block; width: 100%; height: 20px; background: #575757; }
.r29 { height: 29px; }
.r29 + .lastrow { height: 35px; border-top: 1px solid #4a4a4a; margin-top: 4px; }
.cells + .r29 { margin-top: 3px; }
.off { color: #757575; }
.end { margin: 0 4px 0 auto; }
.dis { display: flex; align-items: center; width: 55px; height: 20px; padding-left: 3px; background: #575757; }
.dis input { width: 34px; margin-left: 6px; font: 10px/14px "DejaVu Sans Mono", monospace; color: #757575; }
```
